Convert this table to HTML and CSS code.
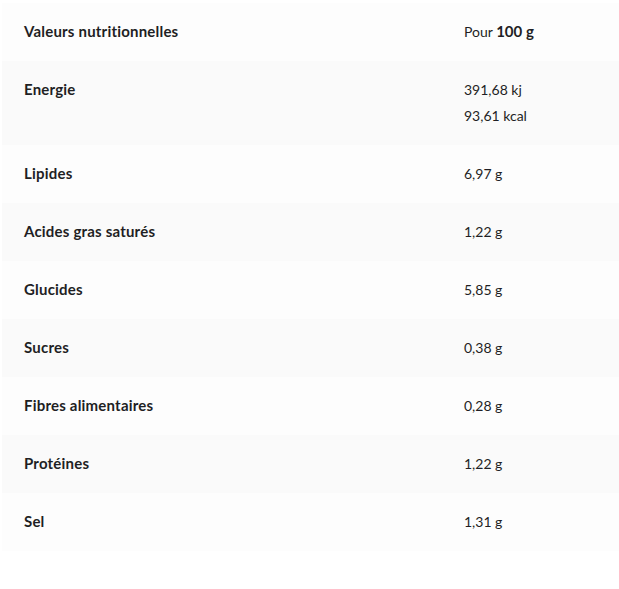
FILE: index.html
```html
<!DOCTYPE html>
<html lang="fr">
<head>
<meta charset="utf-8">
<link rel="stylesheet" href="styles.css">
</head>
<body>
<div class="page">
  <div class="table">
    <div class="row">
      <div class="label">Valeurs nutritionnelles</div>
      <div class="value">Pour <b>100 g</b></div>
    </div>
    <div class="row">
      <div class="label">Energie</div>
      <div class="value">391,68 kj<br>93,61 kcal</div>
    </div>
    <div class="row">
      <div class="label">Lipides</div>
      <div class="value">6,97 g</div>
    </div>
    <div class="row">
      <div class="label">Acides gras saturés</div>
      <div class="value">1,22 g</div>
    </div>
    <div class="row">
      <div class="label">Glucides</div>
      <div class="value">5,85 g</div>
    </div>
    <div class="row">
      <div class="label">Sucres</div>
      <div class="value">0,38 g</div>
    </div>
    <div class="row">
      <div class="label">Fibres alimentaires</div>
      <div class="value">0,28 g</div>
    </div>
    <div class="row">
      <div class="label">Protéines</div>
      <div class="value">1,22 g</div>
    </div>
    <div class="row">
      <div class="label">Sel</div>
      <div class="value">1,31 g</div>
    </div>
  </div>
</div>
</body>
</html>
```
FILE: styles.css
```css
html, body {
  margin: 0;
  padding: 0;
  background: #ffffff;
}
.page {
  padding: 3px 0 0 2px;
  font-family: "Lato", "Noto Sans", sans-serif;
  font-size: 14px;
  color: #1f1f24;
  font-variant-ligatures: none;
}
.table {
  display: flex;
  flex-direction: column;
}
.row {
  display: grid;
  grid-template-columns: 440px 1fr;
  padding: 16px 22px;
  line-height: 26px;
}
.row:nth-child(odd) {
  background: #fdfdfd;
}
.row:nth-child(even) {
  background: #fafafa;
}
.label {
  font-weight: 700;
  font-size: 15px;
  letter-spacing: 0.2px;
  line-height: 25px;
}
.value b {
  font-weight: 700;
  font-size: 15px;
  line-height: 0;
}
```
